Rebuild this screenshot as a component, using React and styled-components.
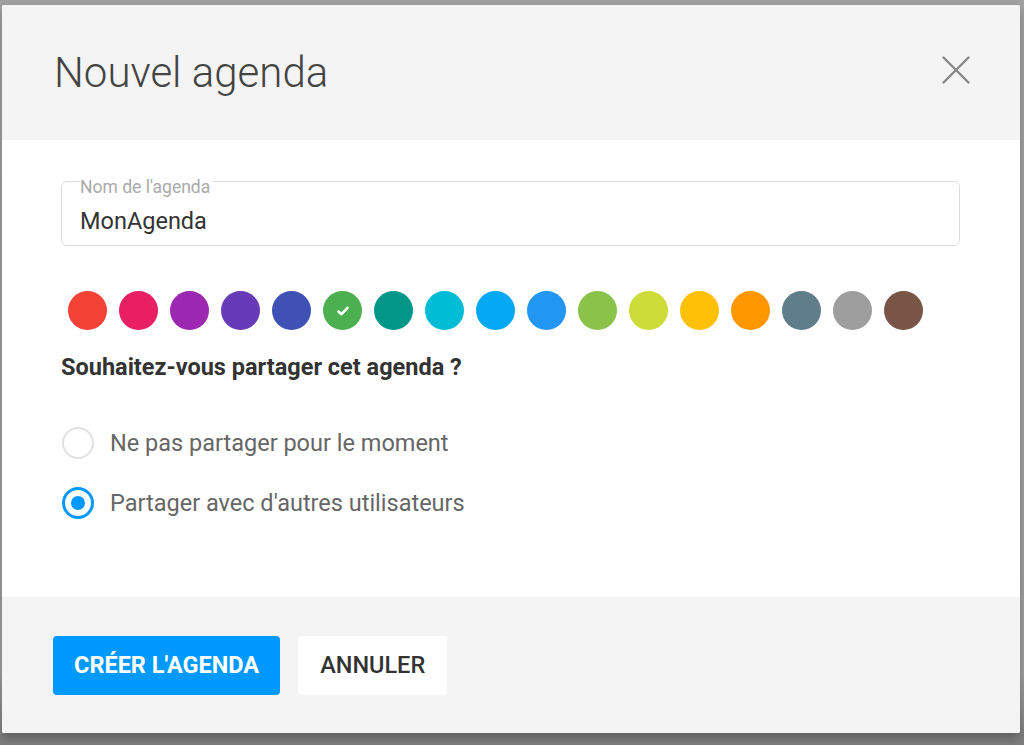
import React, { useState } from 'react';
import styled, { createGlobalStyle } from 'styled-components';

const COLORS = [
  '#f44336', '#e91e63', '#9c27b0', '#673ab7', '#3f51b5', '#4caf50',
  '#009688', '#00bcd4', '#03a9f4', '#2196f3', '#8bc34a', '#cddc39',
  '#ffc107', '#ff9800', '#607d8b', '#9e9e9e', '#795548',
];

const GlobalStyle = createGlobalStyle`
  html, body {
    margin: 0;
    padding: 0;
    background: #9f9f9f;
    font-family: Roboto, "Liberation Sans", Arial, sans-serif;
  }
`;

const Backdrop = styled.div`
  width: 1024px;
  height: 745px;
  padding: 5px 4px 12px 2px;
  box-sizing: border-box;
  background: linear-gradient(#a0a0a0 0, #9f9f9f 90%, #7d7d7d 100%);
`;

const Modal = styled.div`
  height: 728px;
  display: flex;
  flex-direction: column;
  background: #fff;
  border-radius: 2px;
  box-shadow: 0 6px 10px rgba(0, 0, 0, 0.25);
  overflow: hidden;
`;

const Header = styled.div`
  height: 135px;
  flex: none;
  display: flex;
  align-items: center;
  justify-content: space-between;
  padding: 0 49px 0 52px;
  background: #f4f4f4;
`;

const Title = styled.h1`
  margin: 0;
  font-size: 42px;
  font-weight: 300;
  color: #444;
`;

const CloseButton = styled.button`
  border: none;
  background: none;
  padding: 0;
  margin-bottom: 6px;
  width: 30px;
  height: 30px;
  display: flex;
  align-items: center;
  justify-content: center;
  cursor: pointer;
`;

const Body = styled.div`
  flex: 1;
  padding: 28px 60px 0 59px;
  display: flex;
  flex-direction: column;
`;

const Field = styled.fieldset`
  margin: 0;
  padding: 0 18px 10px;
  border: 1px solid #dcdcdc;
  border-radius: 6px;
`;

/* extra top padding drops the label text just under the border line */
const Legend = styled.legend`
  padding: 12px 3px 0 0;
  font-size: 17.5px;
  line-height: 14px;
  color: #aaa;
`;

const TextInput = styled.input`
  border: none;
  outline: none;
  padding: 0;
  margin-top: 13px;
  width: 100%;
  height: 28px;
  font-family: inherit;
  font-size: 23.5px;
  color: #333;
  background: transparent;
`;

const Swatches = styled.div`
  display: flex;
  gap: 12px;
  margin: 45px 0 0 7px;
`;

const Swatch = styled.button`
  width: 39px;
  height: 39px;
  border-radius: 50%;
  border: none;
  padding: 0;
  background: ${(p) => p.$color};
  display: flex;
  align-items: center;
  justify-content: center;
  cursor: pointer;
`;

const Question = styled.div`
  margin-top: 23px;
  font-size: 23.5px;
  line-height: 28px;
  font-weight: 700;
  color: #333;
`;

const Options = styled.div`
  margin-top: 46px;
  display: flex;
  flex-direction: column;
  gap: 28px;
`;

const Option = styled.label`
  display: flex;
  align-items: center;
  gap: 16px;
  font-size: 23.5px;
  line-height: 28px;
  color: #666;
  cursor: pointer;
`;

const RadioMark = styled.span`
  width: 32px;
  height: 32px;
  margin-left: 1px;
  box-sizing: border-box;
  border-radius: 50%;
  border: ${(p) => (p.$checked ? '3px solid #0099ff' : '2px solid #e0e0e0')};
  display: flex;
  align-items: center;
  justify-content: center;
  flex: none;

  &::after {
    content: '';
    width: 14px;
    height: 14px;
    border-radius: 50%;
    background: ${(p) => (p.$checked ? '#0099ff' : 'transparent')};
  }
`;

const Footer = styled.div`
  height: 136px;
  flex: none;
  display: flex;
  align-items: center;
  gap: 18px;
  padding: 0 51px;
  background: #f4f4f4;
`;

const Button = styled.button`
  height: 59px;
  padding: 0 ${(p) => (p.$primary ? '21px' : '22px')};
  border: none;
  border-radius: 4px;
  font-family: inherit;
  font-size: 23.5px;
  font-weight: ${(p) => (p.$primary ? 700 : 500)};
  text-transform: uppercase;
  background: ${(p) => (p.$primary ? '#0099fd' : '#fff')};
  color: ${(p) => (p.$primary ? '#fff' : '#333')};
  cursor: pointer;
`;

const CheckIcon = () => (
  <svg width="16" height="16" viewBox="0 0 16 16">
    <path d="M3.5 8.5 L6.5 11.2 L12.5 4.8" fill="none" stroke="#fff" strokeWidth="2.6" strokeLinecap="round" strokeLinejoin="round" />
  </svg>
);

const CloseIcon = () => (
  <svg width="28" height="28" viewBox="0 0 28 28">
    <path d="M1.5 1.5 L26.5 26.5 M26.5 1.5 L1.5 26.5" stroke="#888" strokeWidth="2.4" strokeLinecap="round" />
  </svg>
);

const App = () => {
  const [name, setName] = useState('MonAgenda');
  const [color, setColor] = useState('#4caf50');
  const [share, setShare] = useState('share');

  return (
    <>
      <GlobalStyle />
      <Backdrop>
        <Modal>
          <Header>
            <Title>Nouvel agenda</Title>
            <CloseButton aria-label="Fermer">
              <CloseIcon />
            </CloseButton>
          </Header>

          <Body>
            <Field>
              <Legend>Nom de l'agenda</Legend>
              <TextInput value={name} onChange={(e) => setName(e.target.value)} />
            </Field>

            <Swatches>
              {COLORS.map((c) => (
                <Swatch key={c} $color={c} onClick={() => setColor(c)}>
                  {c === color && <CheckIcon />}
                </Swatch>
              ))}
            </Swatches>

            <Question>Souhaitez-vous partager cet agenda ?</Question>

            <Options>
              <Option onClick={() => setShare('none')}>
                <RadioMark $checked={share === 'none'} />
                Ne pas partager pour le moment
              </Option>
              <Option onClick={() => setShare('share')}>
                <RadioMark $checked={share === 'share'} />
                Partager avec d'autres utilisateurs
              </Option>
            </Options>
          </Body>

          <Footer>
            <Button $primary>Créer l'agenda</Button>
            <Button>Annuler</Button>
          </Footer>
        </Modal>
      </Backdrop>
    </>
  );
};

export default App;
